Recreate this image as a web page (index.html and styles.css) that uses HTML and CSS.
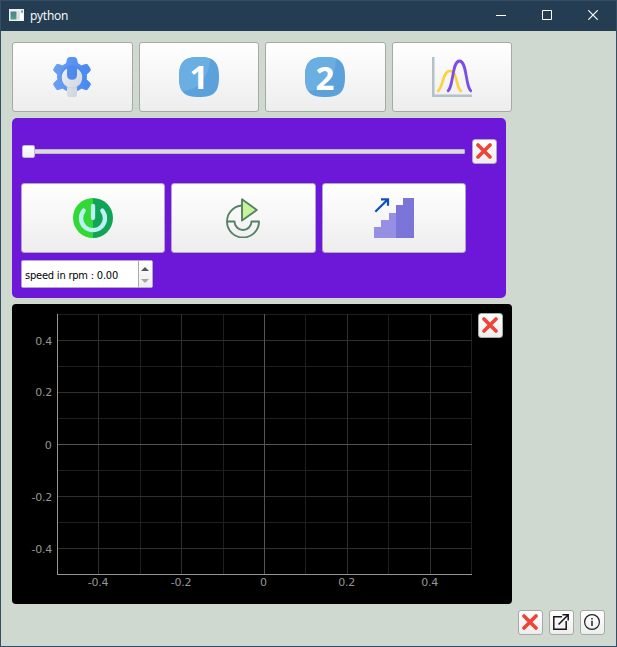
FILE: index.html
```html
<!DOCTYPE html>
<html lang="en">
<head>
<meta charset="utf-8">
<title>python</title>
<link rel="stylesheet" href="styles.css">
</head>
<body>
<svg width="0" height="0" class="defs">
  <defs>
    <symbol id="cross" viewBox="0 0 16 16"><path d="M2 2L14 14M14 2L2 14" fill="none" stroke="#f04337" stroke-width="3.600" stroke-linecap="round"/></symbol>
    <linearGradient id="gear-fill" x1="0" x2="1"><stop offset="0" stop-color="#6ba0f1"/><stop offset="1" stop-color="#4587f2"/></linearGradient>
    <linearGradient id="wrench-fill" x1="0" x2="1" y1="0" y2="1"><stop offset="0" stop-color="#edf0f4"/><stop offset="1" stop-color="#cbcfd8"/></linearGradient>
    <linearGradient id="app-fill" x1="0" x2="0" y1="0" y2="1"><stop offset="0" stop-color="#4d7da0"/><stop offset="1" stop-color="#50a27c"/></linearGradient>
    <clipPath id="squircle"><path d="M20 0C35 0 40 5 40 20S35 40 20 40 0 35 0 20 5 0 20 0Z"/></clipPath>
  </defs>
</svg>
<div class="window">
  <header class="titlebar">
    <svg class="app-icon" width="15" height="12" viewBox="0 0 15 12"><path fill="#eef1f2" d="M0 0h15v12H0z"/><path fill="url(#app-fill)" d="M1.500 2.500h6v8h-6z"/><path fill="#d5dadd" d="M8.500 2.500h2v8h-2z"/><path fill="#fff" d="M11 5h3v5.500h-3z"/><path fill="#5ca78b" d="M12 1.500h2v2h-2z"/></svg>
    <span class="title">python</span>
    <div class="controls">
      <svg width="10" height="10"><path d="M0 5.500H10" stroke="#fff"/></svg>
      <svg width="10" height="10"><path d="M.5.5h9v9h-9z" fill="none" stroke="#fff"/></svg>
      <svg width="10" height="10"><path d="M.3.3L9.700 9.700M9.700.3L.3 9.700" stroke="#fff" stroke-width="1.200"/></svg>
    </div>
  </header>
  <main class="content">
    <nav class="toolbar">
      <button class="btn w121" aria-label="Settings">
        <svg width="40" height="40" viewBox="0 0 40 40">
          <path fill="url(#gear-fill)" stroke="url(#gear-fill)" stroke-width="1" d="M15.500 2Q16 .5 18 .5h4q2 0 2.500 1.500l1 4.500 4 2.300 4.300-1.400q1.400-.3 2.200 1l2 3.400q.8 1.400-.3 2.400l-3.400 3.200v5.200l3.400 3.200q1.100 1 .3 2.400l-2 3.400q-.8 1.300-2.200 1l-4.300-1.400-4 2.300h-11l-4-2.300-4.300 1.400q-1.400.3-2.200-1l-2-3.400q-.8-1.400.3-2.400l3.400-3.200v-5.200l-3.400-3.200q-1.100-1-.3-2.400l2-3.400q.8-1.300 2.200-1l4.300 1.400 4-2.300z"/>
          <circle cx="20" cy="19.500" r="11.300" fill="#3c76df" opacity=".3"/>
          <path fill="url(#wrench-fill)" d="M15 11.500v6.500q0 4.700 5 4.700t5-4.700v-6.500q5.300 3 5.300 9 0 6-5.300 9.200V38q0 2-2 2h-6q-2 0-2-2v-8.300q-5.300-3.200-5.300-9.200 0-6 5.300-9z"/>
          <path fill="#b9c0cc" opacity=".4" d="M15 29.500q5 2 10 0v1.700H15z"/>
        </svg>
      </button>
      <button class="btn w120" aria-label="One">
        <svg width="40" height="60" viewBox="0 -10 40 60"><g clip-path="url(#squircle)"><path fill="#5ba2dc" d="M0 0h40v40H0z"/><path fill="#6bafe2" d="M0 0h31q0 10-4 18T17 30 0 34z"/></g><text class="digit" x="20" y="32">1</text></svg>
      </button>
      <button class="btn w121" aria-label="Two">
        <svg width="40" height="60" viewBox="0 -10 40 60"><g clip-path="url(#squircle)"><path fill="#5ba2dc" d="M0 0h40v40H0z"/><path fill="#6bafe2" d="M0 0h31q0 10-4 18T17 30 0 34z"/></g><text class="digit" x="20" y="32.500">2</text></svg>
      </button>
      <button class="btn w120" aria-label="Plot">
        <svg width="40" height="40" viewBox="0 0 40 40" fill="none"><path d="M1.200 0V38.700H40" stroke="#b4c1c9" stroke-width="2.600"/><path d="M5.300 34.500C11.500 32 10 14 18 14S23.500 32 29.700 34.500" stroke="#fdd33d" stroke-width="2.700"/><path d="M15.200 34.500C22 31 19.500 4 27.500 4S33 31 39.700 34.500" stroke="#7b4ee6" stroke-width="2.800"/></svg>
      </button>
    </nav>

    <section class="motor">
      <div class="slider-row">
        <div class="slider"><div class="handle"></div></div>
        <button class="btn small" aria-label="Close"><svg width="16" height="16"><use href="#cross"/></svg></button>
      </div>
      <div class="actions">
        <button class="btn w144" aria-label="Power">
          <svg width="40" height="40" viewBox="0 0 40 40" fill="none"><path fill="#31d934" d="M20 0a20 20 0 0 0 0 40z"/><path fill="#10a556" d="M20 0a20 20 0 0 1 0 40z"/><path d="M10.700 12.600A12 12 0 1 0 29.300 12.600M20 8V20" stroke="#bdf0f4" stroke-width="4.300" stroke-linecap="round"/></svg>
        </button>
        <button class="btn w145" aria-label="Run">
          <svg width="40" height="40" viewBox="0 0 40 40" fill="none" stroke="#568065" stroke-width="1.900" stroke-linejoin="round"><path d="M19 7.500A16 16 0 0 0 4 23.500a16 16 0 0 0 32 0h-7.500a8.500 8.500 0 0 1-17 0H4"/><path fill="#c5f49b" d="M19 1.300V22.500L33.800 12z"/></svg>
        </button>
        <button class="btn w144" aria-label="Steps">
          <svg width="40" height="40" viewBox="0 0 40 40"><path fill="#978fe3" d="M0 40V29h7v-7h8v-7h7v25z"/><path fill="#7c75d9" d="M22 40V7h7V0h11v40z"/><path d="M1.300 13.700L14 1.300M7 1.300h7v6.500" fill="none" stroke="#0c50c4" stroke-width="2.200"/></svg>
        </button>
      </div>
      <div class="spin">
        <span class="spin-text">speed in rpm : 0.00</span>
        <div class="spin-buttons"><svg width="8" height="4"><path fill="#555" d="M0 4L4 0 8 4z"/></svg><svg width="8" height="4"><path fill="#a5a5a5" d="M0 0L4 4 8 0z"/></svg></div>
      </div>
    </section>

    <section class="plot">
      <svg class="chart" width="466" height="300" viewBox="12 304 466 300" shape-rendering="crispEdges">
        <g fill="none">
          <path stroke="#1f1f1f" d="M57 314.500H472M57 366.500H472M57 418.500H472M57 470.500H472M57 522.500H472M140.500 314V574M223.500 314V574M305.500 314V574M388.500 314V574M471.500 314V574"/>
          <path stroke="#303030" d="M57 340.500H472M57 392.500H472M57 496.500H472M57 548.500H472M98.500 314V574M181.500 314V574M347.500 314V574M430.500 314V574"/>
          <path stroke="#555" d="M57 444.500H472M264.500 314V574"/>
          <path stroke="#969696" d="M57.500 314V574.500H472"/>
        </g>
        <g class="tick" text-anchor="end"><text x="52" y="345">0.4</text><text x="52" y="396">0.2</text><text x="51.500" y="449">0</text><text x="52" y="501">-0.2</text><text x="52" y="553">-0.4</text></g>
        <g class="tick" text-anchor="middle"><text x="98" y="586">-0.4</text><text x="181" y="586">-0.2</text><text x="263.300" y="586">0</text><text x="346.700" y="586">0.2</text><text x="429.700" y="586">0.4</text></g>
      </svg>
      <button class="btn small" aria-label="Close"><svg width="16" height="16"><use href="#cross"/></svg></button>
    </section>

    <footer class="footer">
      <button class="btn small" aria-label="Close"><svg width="16" height="16"><use href="#cross"/></svg></button>
      <button class="btn small" aria-label="Open"><svg width="16" height="16" viewBox="0 0 16 16" fill="none" stroke="#17171d" stroke-width="1.500"><path d="M9 2.800H.8v12.400h12.400V7M5.500 10.500L15 1M9.500.8h5.700v5.700"/></svg></button>
      <button class="btn small" aria-label="Info"><svg width="16" height="16" viewBox="0 0 16 16"><circle cx="8" cy="8" r="7.400" fill="none" stroke="#202024" stroke-width="1.200"/><path fill="#333" d="M7.200 4h1.600v1.600H7.200zM7.200 6.800h1.600v5.200H7.200z"/></svg></button>
    </footer>
  </main>
</div>
</body>
</html>
```
FILE: styles.css
```css
* { box-sizing: border-box; }
body { margin: 0; }
.defs { position: absolute; }
svg { display: block; flex: none; }

.window {
  display: flex;
  flex-direction: column;
  width: 617px;
  height: 647px;
  border: 1px solid #344f64;
  background: #cfd9cf;
  overflow: hidden;
}
.titlebar {
  display: flex;
  align-items: center;
  height: 30px;
  padding: 0 18px 0 8px;
  background: #243d53;
  color: #fff;
  font: 12px "Open Sans", sans-serif;
}
.app-icon { margin-top: -2px; }
.title { margin-top: -1px; margin-left: 6px; letter-spacing: -0.25px; }
.controls { display: flex; gap: 36px; margin-left: auto; margin-top: -2px; }

.content { padding: 11px; }
.btn {
  display: flex;
  align-items: center;
  justify-content: center;
  height: 70px;
  padding: 0;
  border: 1px solid #a5aaa5;
  border-radius: 3px;
  background: linear-gradient(#fff, #ededed);
}
.w120 { width: 120px; }
.w121 { width: 121px; padding-right: 1px; }
.w144 { width: 144px; }
.w145 { width: 145px; padding-right: 1px; }
.small { width: 25px; height: 25px; flex: none; padding: 0 1px 1px 0; }
.toolbar { display: flex; gap: 6px; }
.digit { font: 700 33px "Open Sans", sans-serif; fill: #fff; text-anchor: middle; }

.motor {
  width: 494px;
  height: 180px;
  margin-top: 6px;
  padding: 21px 9px 10px;
  border-radius: 5px;
  background: #6d18d9;
}
.motor .btn { border-color: #b3a6c4; }
.slider-row { display: flex; align-items: center; justify-content: space-between; }
.slider {
  display: flex;
  align-items: center;
  width: 443px;
  height: 5px;
  margin-left: 1px;
  border: 1px solid #bfb5ca;
  border-radius: 1px;
  background: #dadada;
}
.handle {
  width: 13px;
  height: 13px;
  flex: none;
  margin-left: -1px;
  border: 1px solid #c2b6d0;
  border-radius: 2px;
  background: linear-gradient(#fff, #f0f0f0);
}
.actions { display: flex; gap: 6px; margin-top: 19px; }
.spin {
  display: flex;
  width: 132px;
  height: 28px;
  margin-top: 7px;
  border: 1px solid #b4a9c1;
  border-radius: 2px;
  background: #fff;
  overflow: hidden;
}
.spin-text {
  width: 116px;
  padding-left: 3px;
  font: 11px/29px "DejaVu Sans Condensed", "DejaVu Sans", sans-serif;
  letter-spacing: -0.2px;
  white-space: nowrap;
  color: #000;
}
.spin-buttons {
  display: flex;
  flex: 1;
  flex-direction: column;
  align-items: center;
  justify-content: center;
  gap: 8px;
  padding-top: 2px;
  padding-right: 2px;
  border-left: 1px solid #aaa;
  background: linear-gradient(#fff, #eee);
}

.plot {
  display: flex;
  width: 500px;
  height: 300px;
  margin-top: 6px;
  border-radius: 4px;
  background: #000;
}
.plot .btn { margin-top: 9px; }
.tick { font: 11px "DejaVu Sans", sans-serif; fill: #969696; letter-spacing: -0.25px; }
.footer { display: flex; justify-content: flex-end; gap: 6px; margin-top: 6px; }
```
